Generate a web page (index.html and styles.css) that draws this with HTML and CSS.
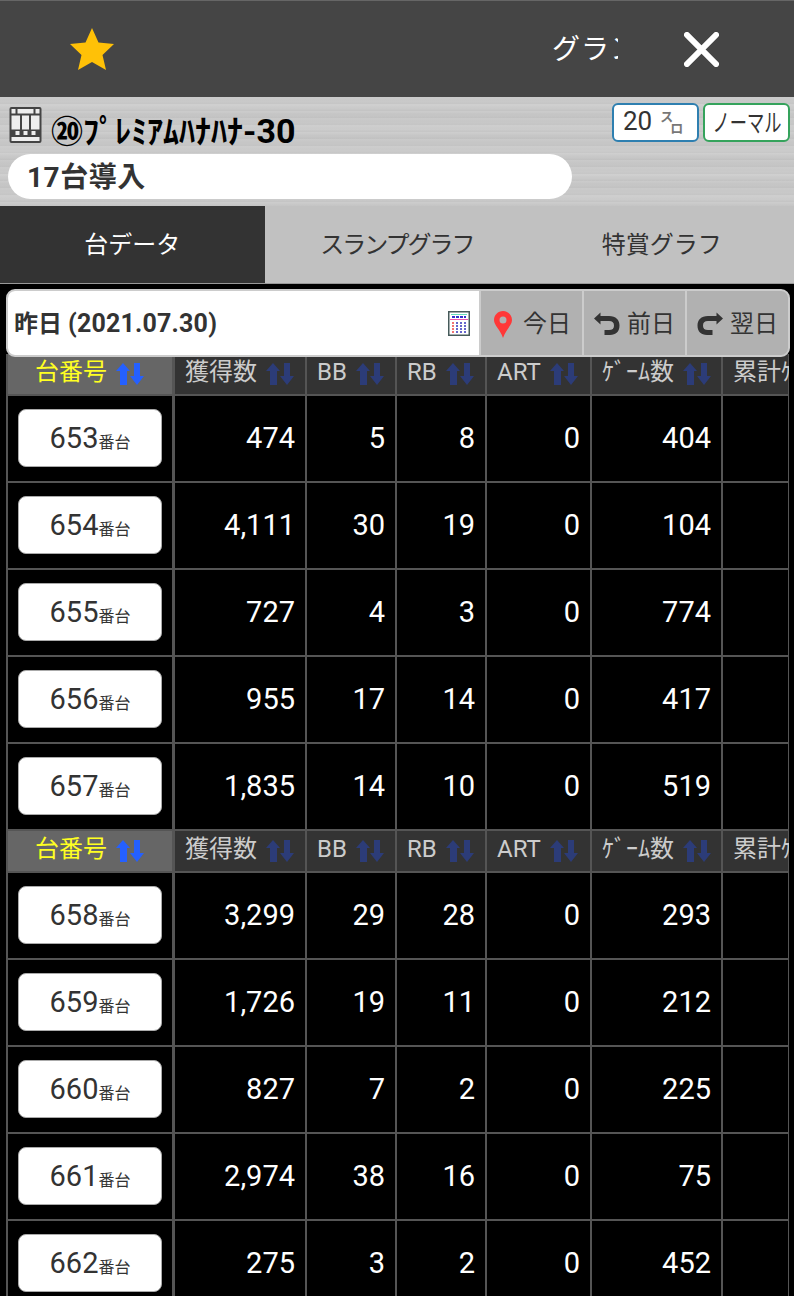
FILE: index.html
```html
<!DOCTYPE html>
<html lang="ja">
<head>
    <meta charset="UTF-8">
    <title>台データ</title>
    <link rel="stylesheet" href="styles.css">
</head>
<body>
    <!-- Shared icons -->
    <svg class="defs">
        <symbol id="sort" viewBox="0 0 28 22">
            <path d="M7 0 L14 8 H11 V22 H4 V8 H0 Z M18 0 H24 V13 H28 L21 22 L14 13 H18 Z"/>
        </symbol>
        <symbol id="turn" viewBox="0 0 26 24">
            <path d="M0 6.500 L6.500 0.500 V4 H15 C22 4 25.500 8 25.500 13.500 C25.500 19.500 22 23 16 23 H10.500 V18 H15 C18.500 18 20 16.500 20 13.700 C20 10.500 18.500 9 15 9 H6.500 V12.500 Z"/>
        </symbol>
    </svg>

    <header>
        <svg class="star" viewBox="0 0 44 42"><path d="M22 0 L28.500 14.500 L44 16 L32.500 27 L36 42 L22 34 L8 42 L11.500 27 L0 16 L15.500 14.500 Z"/></svg>
        <div class="marquee">グラン</div>
        <svg class="closeBtn" viewBox="0 0 36 36"><path d="M3 3 L33 33 M33 3 L3 33"/></svg>
    </header>

    <section class="machine">
        <div class="machineTop">
            <svg class="reel" viewBox="0 0 32 36">
                <rect x="1" y="1" width="30" height="34" rx="1" fill="#eee" stroke="#444" stroke-width="2"/>
                <path d="M1 7.500 H31 M1 23.500 H31 M1 29 H31" stroke="#444" stroke-width="2"/>
                <path d="M1 26 H31" stroke="#444" stroke-width="5"/>
                <path d="M7 1 V7 M25 1 V7 M11.500 8 V28 M20.500 8 V28" stroke="#444" stroke-width="2"/>
                <path d="M6 24 H10 V28 H6 Z M14 24 H18 V28 H14 Z M22 24 H26 V28 H22 Z" fill="#eee"/>
            </svg>
            <h1>⑳ﾌﾟﾚﾐｱﾑﾊﾅﾊﾅ<span>-30</span></h1>
            <div class="tags">
                <span class="tag blue">20 <span class="suro"><i>ス</i><i>ロ</i></span></span>
                <span class="tag green"><span class="narrow">ノーマル</span></span>
            </div>
        </div>
        <div class="intro">17台導入</div>
    </section>

    <nav>
        <a class="active">台データ</a>
        <a class="tight">スランプグラフ</a>
        <a>特賞グラフ</a>
    </nav>

    <div class="dateBar">
        <div class="date">
            <div>昨日 <span>(2021.07.30)</span></div>
            <svg class="calendar" viewBox="0 0 22 25">
                <rect x="0.750" y="0.750" width="20.500" height="23.500" fill="#fff" stroke="#465a5a" stroke-width="1.500"/>
                <path d="M3 3.500 H19" stroke="#6db" stroke-width="1"/>
                <path d="M4 6 H18" stroke="#33c" stroke-width="2" stroke-dasharray="3 1"/>
                <path d="M2 8.500 H20" stroke="#e5a" stroke-width="1"/>
                <path d="M5 11 V23" stroke="#e44" stroke-width="1.500" stroke-dasharray="2 1"/>
                <path d="M9 11 V23 M13 11 V23 M17 11 V23" stroke="#33b" stroke-width="1.500" stroke-dasharray="2 1"/>
            </svg>
        </div>
        <button><svg class="pin" viewBox="0 0 18 27"><path fill-rule="evenodd" d="M9 0 C14 0 18 4 18 9 C18 14.500 12 18 9 27 C6 18 0 14.500 0 9 C0 4 4 0 9 0 Z M9 5.500 A3.500 3.500 0 1 0 9 12.500 A3.500 3.500 0 1 0 9 5.500 Z"/></svg>今日</button>
        <button><svg class="turn"><use href="#turn"/></svg>前日</button>
        <button><svg class="turn next"><use href="#turn"/></svg>翌日</button>
    </div>

    <main id="dataTable"></main>

    <script>
        const dataTable = document.getElementById('dataTable');
        const columns = ['台番号', '獲得数', 'BB', 'RB', 'ART', 'ｹﾞｰﾑ数', '累計ｹ'];
        const machines = [
            [653, '474', 5, 8, 0, 404],
            [654, '4,111', 30, 19, 0, 104],
            [655, '727', 4, 3, 0, 774],
            [656, '955', 17, 14, 0, 417],
            [657, '1,835', 14, 10, 0, 519],
            [658, '3,299', 29, 28, 0, 293],
            [659, '1,726', 19, 11, 0, 212],
            [660, '827', 7, 2, 0, 225],
            [661, '2,974', 38, 16, 0, 75],
            [662, '275', 3, 2, 0, 452]
        ];

        const headRow = () => `<div class="row head">${columns.map(c =>
            `<div>${c}<svg class="sort"><use href="#sort"/></svg></div>`).join('')}</div>`;

        const dataRow = ([no, ...values]) => `<div class="row">
            <div><span class="number">${no}<small>番台</small></span></div>
            ${values.map(v => `<div>${v}</div>`).join('')}<div></div></div>`;

        // The heading is repeated every five machines
        dataTable.innerHTML = machines.map((m, i) => (i % 5 === 0 ? headRow() : '') + dataRow(m)).join('');
    </script>
</body>
</html>
```

FILE: styles.css
```css
* {
    box-sizing: border-box;
}
body {
    margin: 0;
    height: 1296px;
    overflow: hidden;
    background-color: #000;
    color: #333;
    font-family: Roboto, "Noto Sans CJK JP", sans-serif;
    font-size: 24px;
}
.defs {
    display: none;
}
header {
    display: flex;
    align-items: center;
    height: 97px;
    padding: 0 75px 0 70px;
    background-color: #454545;
    border-top: 1px solid #666;
    color: #fff;
}
.star {
    width: 44px;
    height: 42px;
    margin-right: auto;
    fill: #ffc107;
}
.marquee {
    width: 66px;
    margin: 0 66px 4px 0;
    overflow: hidden;
    white-space: nowrap;
    font-size: 28px;
    letter-spacing: 1px;
}
.closeBtn {
    width: 35px;
    height: 35px;
    stroke: #fff;
    stroke-width: 6;
    stroke-linecap: round;
}
/* Brushed metal panel */
.machine {
    height: 109px;
    padding: 6px 4px 0 8px;
    background:
        repeating-linear-gradient(rgba(255, 255, 255, 0.08) 0 1px, transparent 3px 5px, rgba(0, 0, 0, 0.02) 6px 7px),
        repeating-linear-gradient(#c6c6c6 0, #cccccc 9px, #c5c5c5 17px, #c6c6c6 23px);
}
.machineTop {
    display: flex;
    height: 51px;
}
.reel {
    width: 33px;
    height: 36px;
    margin: 4px 9px 0 1px;
}
h1 {
    margin: 5px 0 0;
    font-size: 32px;
    line-height: 46px;
    font-weight: bold;
    color: #000;
}
h1 span {
    font-size: 34px;
}
.tags {
    display: flex;
    gap: 4px;
    margin-left: auto;
}
.tag {
    display: flex;
    align-items: center;
    width: 87px;
    height: 39px;
    padding-bottom: 3px;
    border: 2px solid;
    border-radius: 6px;
    background-color: #fff;
    color: #333;
    font-size: 26px;
}
.blue {
    padding-left: 9px;
    border-color: #2e7fb0;
}
.green {
    justify-content: center;
    padding-bottom: 4px;
    border-color: #35a35c;
}
.suro {
    display: flex;
    margin: 4px 0 0 8px;
    font-size: 13px;
    font-weight: bold;
    line-height: 14px;
    color: #777;
}
.suro i {
    width: 13px;
    font-style: normal;
}
.suro i + i {
    margin: 12px 0 0 -3px;
}
.narrow {
    font-size: 25px;
    transform: scaleX(0.69);
    white-space: nowrap;
}
.intro {
    width: 564px;
    height: 45px;
    padding-left: 19px;
    border-radius: 23px;
    background-color: #fff;
    font-size: 28px;
    letter-spacing: 0.5px;
    font-weight: bold;
    line-height: 47px;
}
nav {
    display: grid;
    grid-template-columns: repeat(3, 1fr);
    height: 78px;
    background-color: #c1c1c1;
    border-bottom: 1px solid #999;
}
nav a {
    height: 77px;
    line-height: 79px;
    text-align: center;
}
nav .tight {
    letter-spacing: -2px;
}
nav .active {
    background-color: #333;
    color: #fff;
}
.dateBar {
    position: relative;
    z-index: 1;
    display: grid;
    grid-template-columns: 1fr 103px 103px 103px;
    height: 68px;
    margin: 5px 4px 0 6px;
    border: 2px solid #ccc;
    border-radius: 9px;
    overflow: hidden;
    background-color: #b1b1b1;
}
.date {
    display: flex;
    align-items: center;
    justify-content: space-between;
    padding: 0 9px 0 6px;
    background-color: #fff;
    font-weight: bold;
}
.date div {
    padding-bottom: 4px;
}
.date div span {
    font-size: 25px;
    letter-spacing: 0.2px;
}
.calendar {
    width: 22px;
    height: 25px;
}
.dateBar button {
    display: flex;
    align-items: center;
    justify-content: center;
    padding: 0 0 4px;
    border: none;
    border-left: 2px solid #ccc;
    background: none;
    color: #333;
    font: inherit;
}
.pin {
    width: 18px;
    height: 27px;
    margin: 6px 11px 0 2px;
    fill: #ff3838;
}
.turn {
    width: 26px;
    height: 24px;
    margin: 5px 7px 0 0;
    fill: #333;
}
.next {
    transform: scaleX(-1);
}
#dataTable {
    margin: -3px 5px 0 6px;
    border-left: 2px solid #555;
    border-right: 1px solid #555;
}
.row {
    display: grid;
    grid-template-columns: 167px 132px 90px 90px 105px 131px 66px;
    height: 87px;
    border-bottom: 2px solid #555;
    color: #fff;
    font-size: 29px;
}
.row > div {
    display: flex;
    align-items: center;
    justify-content: flex-end;
    padding: 0 10px 2px 0;
    border-right: 2px solid #555;
    overflow: hidden;
    white-space: nowrap;
}
.row > div:first-child {
    justify-content: center;
    padding-right: 0;
    border-right-width: 3px;
}
.row > div:last-child {
    border-right: none;
}
.number {
    width: 144px;
    height: 58px;
    border: 1px solid #aaa;
    border-radius: 8px;
    background-color: #fff;
    color: #333;
    line-height: 56px;
    text-align: center;
}
.number small {
    font-size: 16px;
}
/* Column headings */
.row.head {
    height: 42px;
    background-color: #333;
    color: #ccc;
    font-size: 24px;
    line-height: 34px;
}
.row.head > div {
    justify-content: flex-start;
    padding: 0 0 5px 10px;
}
.row.head > div:first-child {
    padding-left: 27px;
    background-color: #666;
    color: #ff2;
}
.sort {
    flex: none;
    width: 28px;
    height: 22px;
    margin: 4px 0 0 9px;
    fill: #2c3c78;
}
.head > div:first-child .sort {
    fill: #2560ff;
}
```
